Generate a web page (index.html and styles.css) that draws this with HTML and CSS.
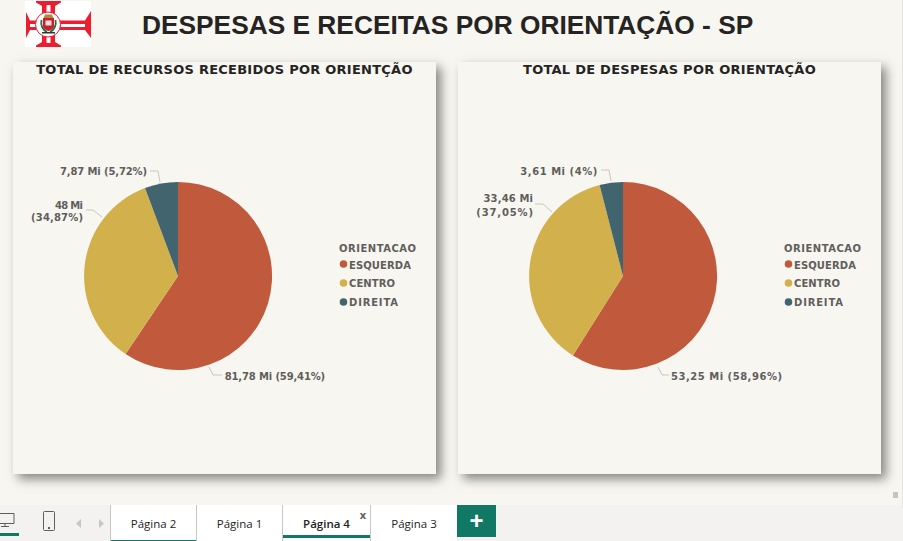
FILE: index.html
```html
<!DOCTYPE html>
<html lang="pt">
<head>
<meta charset="utf-8">
<title>Despesas e receitas por orientação - SP</title>
<link rel="stylesheet" href="styles.css">
</head>
<body>
<div class="page">
  <header class="header">
    <svg class="logo" viewBox="0 0 66 46" aria-hidden="true">
      <rect width="66" height="46" fill="#fff"/>
      <g fill="#ed1c2e">
        <path d="M11 0H36V1.500L30 5V41L36 44.500V46H11V44.500L17 41V5L11 1.500Z"/>
        <path d="M1 11L5 19.500H60L66 10V37L60 29H5L1 37Z"/>
      </g>
      <g fill="#fff">
        <rect x="21.500" y="4" width="4" height="8"/>
        <rect x="21.500" y="35" width="4" height="7"/>
        <rect x="5" y="23" width="6" height="3"/>
        <rect x="36" y="23" width="24" height="3"/>
      </g>
      <circle cx="23" cy="23.500" r="12.500" fill="#fff" stroke="#ed1c2e" stroke-width="1"/>
      <path d="M18.500 17L20 13.500H27L28.500 17Z" fill="#a98c3c"/>
      <path d="M18 17H29V25C29 27.500 26 29.500 23.500 30C21 29.500 18 27.500 18 25Z" fill="#c8202e"/>
      <rect x="20.500" y="19.500" width="6" height="5" fill="#f6dcdc"/>
      <path d="M16.500 19C15.500 24 17.500 29 22 31" fill="none" stroke="#1f6f3a" stroke-width="1.800"/>
      <path d="M30.500 19C31.500 24 29.500 29 25 31" fill="none" stroke="#1f6f3a" stroke-width="1.800"/>
      <rect x="17" y="31" width="13" height="1.500" fill="#333"/>
    </svg>
    <h1 class="page-title">DESPESAS E RECEITAS POR ORIENTAÇÃO - SP</h1>
  </header>

  <main class="cards">
    <section class="card">
      <h2 class="card-title">TOTAL DE RECURSOS RECEBIDOS POR ORIENTÇÃO</h2>
      <svg class="chart" viewBox="0 0 423 394">
        <g transform="translate(165 196)">
          <path class="s-red" d="M0 0V-94A94 94 0 1 1-52.400 78Z"/>
          <path class="s-gold" d="M0 0L-52.400 78A94 94 0 0 1-33-88Z"/>
          <path class="s-blue" d="M0 0L-33-88A94 94 0 0 1 0-94Z"/>
        </g>
        <g transform="translate(164 196)">
          <path class="lead" d="M-27-105H-19L-17-94"/>
          <path class="lead" d="M-91-66H-84L-75-59"/>
          <path class="lead" d="M32 91L36 99H45"/>
          <text class="lbl" x="-30" y="-101" text-anchor="end" textLength="87">7,87 Mi (5,72%)</text>
          <text class="lbl" x="-94" y="-67" text-anchor="end" textLength="28">48 Mi</text>
          <text class="lbl" x="-94" y="-55" text-anchor="end" textLength="52">(34,87%)</text>
          <text class="lbl" x="47.700" y="103.500" textLength="100.500">81,78 Mi (59,41%)</text>
        </g>
        <g transform="translate(326 172)">
          <text class="lbl" y="0" textLength="77">ORIENTACAO</text>
          <circle class="s-red" cx="4.500" cy="12" r="3.800"/>
          <text class="lbl" x="10" y="16.500" textLength="62">ESQUERDA</text>
          <circle class="s-gold" cx="4.500" cy="31" r="3.800"/>
          <text class="lbl" x="10" y="34.500" textLength="46">CENTRO</text>
          <circle class="s-blue" cx="4.500" cy="50" r="3.800"/>
          <text class="lbl" x="10" y="53.500" textLength="49">DIREITA</text>
        </g>
      </svg>
    </section>

    <section class="card">
      <h2 class="card-title">TOTAL DE DESPESAS POR ORIENTAÇÃO</h2>
      <svg class="chart" viewBox="0 0 423 394">
        <g transform="translate(165 196)">
          <path class="s-red" d="M0 0V-94A94 94 0 1 1-50.100 79.500Z"/>
          <path class="s-gold" d="M0 0L-50.100 79.500A94 94 0 0 1-23.400-91Z"/>
          <path class="s-blue" d="M0 0L-23.400-91A94 94 0 0 1 0-94Z"/>
        </g>
        <g transform="translate(164 196)">
          <path class="lead" d="M-21-106H-13L-11-95"/>
          <path class="lead" d="M-87-72H-79L-70-64"/>
          <path class="lead" d="M36 91L40 99H47"/>
          <text class="lbl" x="-24.700" y="-101" text-anchor="end" textLength="77">3,61 Mi (4%)</text>
          <text class="lbl" x="-89" y="-74" text-anchor="end" textLength="49.500">33,46 Mi</text>
          <text class="lbl" x="-89" y="-60" text-anchor="end" textLength="56.700">(37,05%)</text>
          <text class="lbl" x="49" y="103.500" textLength="111">53,25 Mi (58,96%)</text>
        </g>
        <g transform="translate(326 172)">
          <text class="lbl" y="0" textLength="77">ORIENTACAO</text>
          <circle class="s-red" cx="4.500" cy="12" r="3.800"/>
          <text class="lbl" x="10" y="16.500" textLength="62">ESQUERDA</text>
          <circle class="s-gold" cx="4.500" cy="31" r="3.800"/>
          <text class="lbl" x="10" y="34.500" textLength="46">CENTRO</text>
          <circle class="s-blue" cx="4.500" cy="50" r="3.800"/>
          <text class="lbl" x="10" y="53.500" textLength="49">DIREITA</text>
        </g>
      </svg>
    </section>
  </main>

  <nav class="tabbar">
    <div class="views">
      <div class="view view-active">
        <svg class="view-icon" width="18" height="18" viewBox="0 0 18 18" aria-hidden="true"><path d="M-5 2.500H14V12.500H-5M5 12.500V15.500M1 15.500H9" fill="none" stroke="#605e5c"/></svg>
      </div>
      <div class="view">
        <svg class="view-icon" width="14" height="21" viewBox="0 0 14 21" aria-hidden="true"><rect x="0.500" y="0.500" width="11" height="19" rx="1" fill="none" stroke="#605e5c"/><rect x="5" y="16" width="2" height="2" fill="#605e5c"/></svg>
      </div>
    </div>
    <div class="arrows">
      <svg width="6" height="9" viewBox="0 0 6 9" aria-hidden="true"><path d="M5 0v9L0 4.500z" fill="#c8c6c4"/></svg>
      <svg width="6" height="9" viewBox="0 0 6 9" aria-hidden="true"><path d="M1 0v9l5-4.500z" fill="#c8c6c4"/></svg>
    </div>
    <div class="tabs">
      <div class="tab tab-underlined">Página 2</div>
      <div class="tab">Página 1</div>
      <div class="tab tab-active">Página 4<span class="close">x</span></div>
      <div class="tab tab-last">Página 3</div>
      <div class="add">+</div>
    </div>
  </nav>
  <div class="scroller"><div class="thumb"></div></div>
</div>
</body>
</html>
```
FILE: styles.css
```css
* { box-sizing: border-box; }
html, body { margin: 0; height: 100%; }
body { overflow: hidden; background: #f8f6f1; }

.page {
  position: relative;
  width: 903px;
  height: 541px;
  display: flex;
  flex-direction: column;
  background: #f8f6f1;
}

.header {
  height: 62px;
  padding: 1px 0 0 25px;
  display: flex;
  align-items: flex-start;
}
.logo { width: 66px; height: 46px; flex: none; }
.page-title {
  margin: 7px 0 0 51px;
  font: bold 26.300px/34px "Liberation Sans", Arial, sans-serif;
  color: #252423;
  white-space: nowrap;
}

.cards {
  height: 443px;
  padding-left: 13px;
  display: flex;
  align-items: flex-start;
  gap: 22px;
}
.card {
  width: 423px;
  height: 412px;
  background: #f8f6f1;
  box-shadow: 5px 5px 10px rgba(60, 58, 50, .6);
}
.card-title {
  margin: 0;
  height: 18px;
  font: bold 13px/16px "DejaVu Sans", sans-serif;
  letter-spacing: .25px;
  color: #252423;
  text-align: center;
}
.chart { display: block; width: 423px; height: 394px; }

.s-red { fill: #c15a3c; }
.s-gold { fill: #d2b04c; }
.s-blue { fill: #41646f; }
.lead { fill: none; stroke: #c8c6c0; stroke-width: 1; }
.lbl {
  font: bold 10px "DejaVu Sans", sans-serif;
  fill: #605e5c;
}

.tabbar {
  height: 36px;
  display: flex;
  background: #f3f2f1;
  font: 11.500px "Open Sans", sans-serif;
  color: #252423;
}
.views { width: 68px; display: flex; flex: none; }
.view { height: 31px; padding-top: 6px; padding-left: 0; }
.view-active { width: 19px; margin-right: 24px; flex: none; box-shadow: inset 0 -3px 0 #117865; }
.view-icon { display: block; }
.arrows { width: 42px; flex: none; display: flex; gap: 16px; padding: 14px 0 0 8px; align-items: flex-start; }
.tabs { display: flex; flex: none; }
.tab {
  position: relative;
  width: 86px;
  height: 36px;
  background: #fff;
  border-left: 1px solid #c8c6c4;
  display: flex;
  align-items: center;
  justify-content: center;
}
.tab-last { width: 87px; }
.tab-underlined { box-shadow: inset 0 -1px 0 #117865; }
.tab-active { width: 88px; font-weight: 600; }
.tab-active::after { content: ""; position: absolute; left: 0; right: 0; bottom: 3px; height: 3px; background: #117865; }
.close { position: absolute; top: 2px; right: 4px; font: bold 11px "Open Sans", sans-serif; color: #605e5c; }
.add {
  width: 39px;
  height: 32px;
  background: #117865;
  color: #fff;
  font: bold 24px/32px "Liberation Sans", sans-serif;
  text-align: center;
}

.scroller {
  position: absolute;
  top: 0;
  right: 0;
  width: 10px;
  height: 508px;
  border-right: 1px solid #e6e4e0;
}
.thumb {
  position: absolute;
  top: 492px;
  left: 0;
  width: 5px;
  height: 6px;
  background: #c4c4c0;
}
```
